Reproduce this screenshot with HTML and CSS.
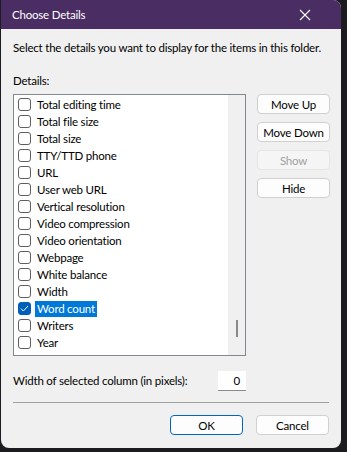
FILE: index.html
```html
<!DOCTYPE html>
<html lang="en">

<head>
    <meta charset="UTF-8">
    <title>Choose Details</title>
    <link rel="stylesheet" href="styles.css">
</head>

<body>
    <div class="window">
        <!-- 標題列 -->
        <div class="titlebar">
            <span class="title">Choose Details</span>
            <svg class="close" width="12" height="12" viewBox="0 0 12 12">
                <path d="M1 1 L11 11 M11 1 L1 11" stroke="#ffffff" stroke-width="1.1" fill="none" />
            </svg>
        </div>

        <div class="content">
            <p class="desc">Select the details you want to display for the items in this folder.</p>
            <p class="label">Details:</p>

            <div class="main">
                <!-- 欄位清單 -->
                <div class="listbox">
                    <ul class="items">
                        <li><span class="box"></span><span class="text">Total editing time</span></li>
                        <li><span class="box"></span><span class="text">Total file size</span></li>
                        <li><span class="box"></span><span class="text">Total size</span></li>
                        <li><span class="box"></span><span class="text">TTY/TTD phone</span></li>
                        <li><span class="box"></span><span class="text">URL</span></li>
                        <li><span class="box"></span><span class="text">User web URL</span></li>
                        <li><span class="box"></span><span class="text">Vertical resolution</span></li>
                        <li><span class="box"></span><span class="text">Video compression</span></li>
                        <li><span class="box"></span><span class="text">Video orientation</span></li>
                        <li><span class="box"></span><span class="text">Webpage</span></li>
                        <li><span class="box"></span><span class="text">White balance</span></li>
                        <li><span class="box"></span><span class="text">Width</span></li>
                        <li class="selected">
                            <span class="box checked">
                                <svg width="9" height="9" viewBox="0 0 9 9">
                                    <path d="M1 4.6 L3.4 7 L8 2" stroke="#ffffff" stroke-width="1" fill="none" />
                                </svg>
                            </span><span class="text">Word count</span>
                        </li>
                        <li><span class="box"></span><span class="text">Writers</span></li>
                        <li><span class="box"></span><span class="text">Year</span></li>
                    </ul>
                    <div class="scrollbar">
                        <div class="thumb"></div>
                    </div>
                </div>

                <!-- 右側按鈕 -->
                <div class="side-buttons">
                    <button class="btn">Move Up</button>
                    <button class="btn">Move Down</button>
                    <button class="btn" disabled>Show</button>
                    <button class="btn">Hide</button>
                </div>
            </div>

            <div class="width-row">
                <span>Width of selected column (in pixels):</span>
                <div class="num-input">0</div>
            </div>

            <hr class="sep">

            <div class="footer">
                <button class="btn default">OK</button>
                <button class="btn">Cancel</button>
            </div>
        </div>
    </div>
</body>

</html>
```

FILE: styles.css
```css
/* 基本樣式 */
body {
    margin: 0;
    width: 347px;
    height: 452px;
    background-color: #1c1b20;
    font-family: Lato, "Liberation Sans", sans-serif;
    font-size: 11.5px;
    letter-spacing: -0.2px;
    line-height: 16px;
    color: #000;
    overflow: hidden;
}

p {
    margin: 0;
    white-space: nowrap;
}

.window {  /* 對話框本體 */
    margin-left: 1px;
    width: 340px;
    height: 448px;
    background-color: #f0f0f0;
    border-radius: 0 8px 8px 8px;
    overflow: hidden;
}

.titlebar {
    height: 29px;
    background-color: #4a2d62;
    color: #fff;
    display: flex;
    align-items: center;
    justify-content: space-between;
    padding: 0 30px 0 11px;
}

.content {
    padding: 0 11px 0 12px;
}

.desc {
    margin-top: 11px;
}

.label {
    margin-top: 17px;
}

.main {
    margin-top: 5px;
    display: flex;
    gap: 11px;
}

.listbox {  /* 清單框 */
    width: 231px;
    height: 260px;
    border: 1px solid #828790;
    background-color: #fff;
    display: flex;
}

.items {
    list-style: none;
    margin: 0;
    padding: 1px 0 0 4px;
    flex: 1;
}

.items li {
    height: 17px;
    display: flex;
    align-items: center;
}

.box {  /* 勾選框 */
    width: 11px;
    height: 11px;
    border: 1px solid #5f5f5f;
    border-radius: 3px;
    background-color: #fff;
    flex-shrink: 0;
    display: flex;
    align-items: center;
    justify-content: center;
}

.box.checked {
    background-color: #005fb8;
    border-color: #005fb8;
}

.text {
    margin-left: 4px;
    padding: 0 2px;
    white-space: nowrap;
}

.selected .text {
    background-color: #0078d7;
    color: #fff;
}

.scrollbar {
    width: 17px;
    background-color: #f0f0f0;
    position: relative;
}

.thumb {  /* 捲軸滑塊 */
    position: absolute;
    left: 8px;
    top: 225px;
    width: 2px;
    height: 17px;
    background-color: #8a8a8a;
}

.side-buttons {
    display: flex;
    flex-direction: column;
    gap: 8px;
}

.btn {  /* 按鈕樣式 */
    width: 73px;
    height: 20px;
    padding: 0;
    font-family: inherit;
    font-size: inherit;
    letter-spacing: inherit;
    color: #000;
    background-color: #fdfdfd;
    border: 1px solid #d0d0d0;
    border-radius: 4px;
}

.btn:disabled {
    color: #a0a0a0;
    background-color: #f5f5f5;
    border-color: #e5e5e5;
}

.btn.default {
    border-color: #0067c0;
}

.width-row {
    margin-top: 15px;
    display: flex;
    align-items: center;
    justify-content: space-between;
    padding-right: 84px;
}

.num-input {
    width: 22px;
    height: 19px;
    padding-right: 6px;
    background-color: #fff;
    border-bottom: 1px solid #8a8a8a;
    text-align: right;
    line-height: 19px;
}

.sep {
    margin: 11px 1px 0 0;
    border: none;
    border-top: 1px solid #a0a0a0;
}

.footer {
    margin-top: 12px;
    display: flex;
    justify-content: flex-end;
    gap: 13px;
    padding-right: 1px;
}
```
